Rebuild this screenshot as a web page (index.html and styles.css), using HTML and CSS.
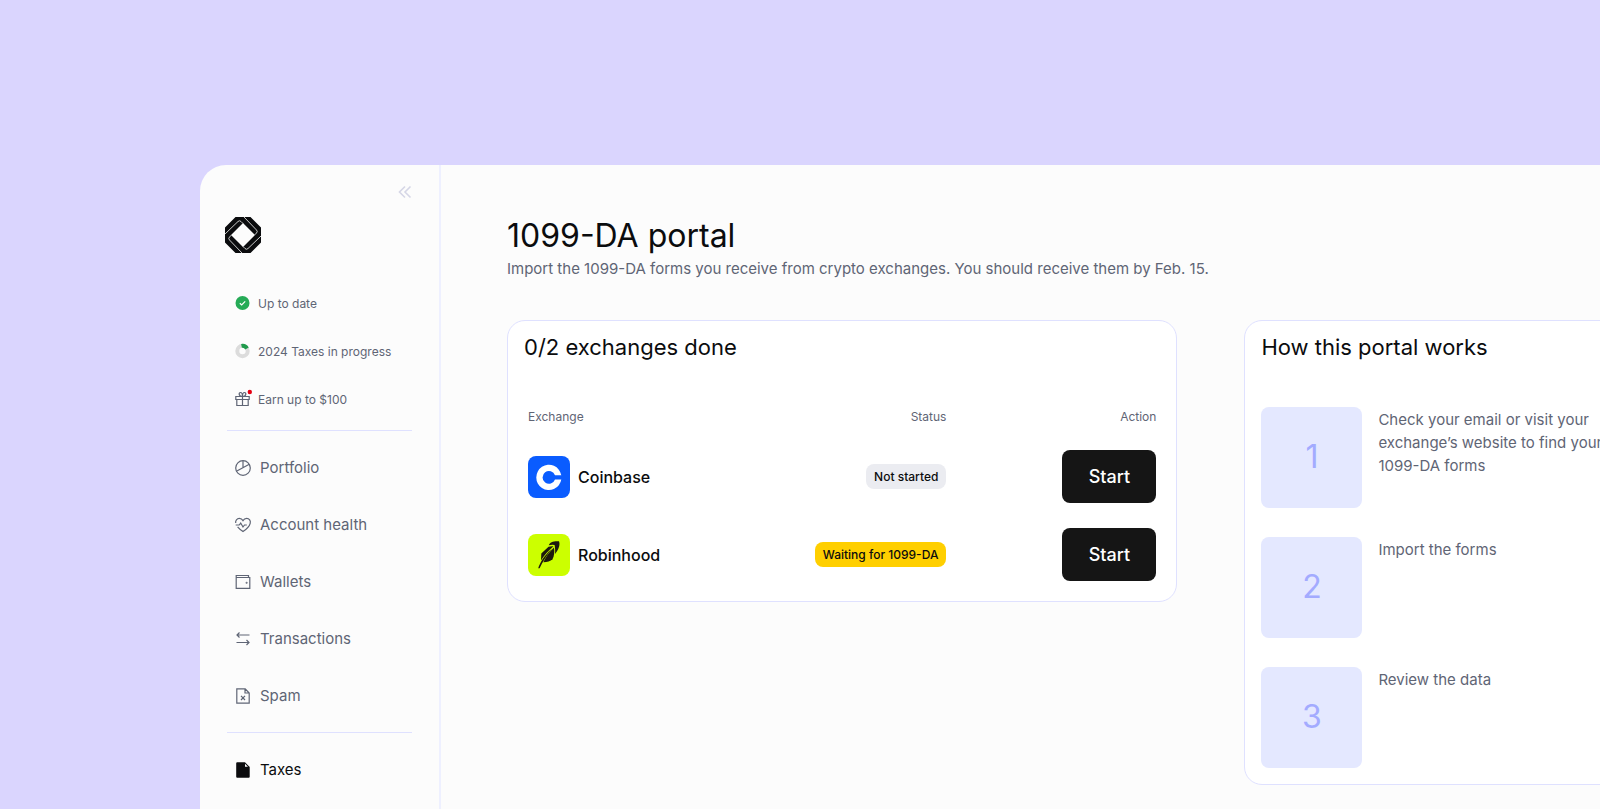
FILE: index.html
```html
<!DOCTYPE html>
<html lang="en">
  <head>
    <meta charset="UTF-8" />
    <meta name="viewport" content="width=device-width, initial-scale=1" />
    <title>1099-DA portal</title>
    <link rel="stylesheet" href="styles.css">
  </head>
  <body>
    <div class="app">
      <aside class="sidebar">
        <button class="collapse" type="button" aria-label="Collapse sidebar">
          <svg width="14" height="14" viewBox="0 0 14 14"><path d="M7 1.500 1.500 7 7 12.500M12.500 1.500 7 7l5.500 5.500"/></svg>
        </button>

        <a class="logo" href="#" aria-label="Home">
          <svg width="36" height="36" viewBox="0 0 36 36">
            <path class="logo-ring" fill-rule="evenodd" d="M10.500 0h15L36 10.500v15L25.500 36h-15L0 25.500v-15zM18 6 6 18 18 30 30 18z"/>
            <g class="logo-seam">
              <path d="M19 0 31.500 13q1.500 1.500 0 3L29.500 18"/>
              <path d="M19 0 31.500 13q1.500 1.500 0 3L29.500 18" transform="rotate(90 18 18)"/>
              <path d="M19 0 31.500 13q1.500 1.500 0 3L29.500 18" transform="rotate(180 18 18)"/>
              <path d="M19 0 31.500 13q1.500 1.500 0 3L29.500 18" transform="rotate(270 18 18)"/>
            </g>
          </svg>
        </a>

        <ul class="quick-list">
          <li>
            <a class="quick-link" href="#">
              <svg width="15" height="16" viewBox="0 0 15 16"><circle cx="7.500" cy="8" r="7" fill="#26ab57" stroke="none"/><path d="M4.800 8.200 6.700 10l3.500-3.700" stroke="#fff"/></svg>
              Up to date
            </a>
          </li>
          <li>
            <a class="quick-link" href="#">
              <svg width="15" height="16" viewBox="0 0 15 16"><circle cx="7.500" cy="8" r="5.200" stroke="#dcdcdc" stroke-width="4"/><path d="M6.500 2.900A5.200 5.200 0 0 1 12 5.400" stroke="#1f9a4b" stroke-width="4"/></svg>
              2024 Taxes in progress
            </a>
          </li>
          <li>
            <a class="quick-link" href="#">
              <svg width="15" height="16" viewBox="0 0 15 16"><path d="M.8 5.500h13.400v3H.8zM1.800 8.500v6h11.400v-6M7.500 5.500v9M7.500 5.500c-4 0-4-4-2-4s2 2.500 2 4c0-1.500 0-4 2-4s2 4-2 4"/><circle cx="14.800" cy="1" r="2.200" fill="#e60012" stroke="none"/></svg>
              Earn up to $100
            </a>
          </li>
        </ul>

        <ul class="nav-list">
          <li>
            <a class="nav-link" href="#">
              <svg width="16" height="16" viewBox="0 0 16 16"><circle cx="8" cy="8" r="7.300"/><path d="M8 .7V8M1.400 11.300 14.300 4.300"/></svg>
              Portfolio
            </a>
          </li>
          <li>
            <a class="nav-link" href="#">
              <svg width="16" height="16" viewBox="0 0 16 16"><path d="M.7 6C.2 3.500 2 1.400 4.300 1.400c1.600 0 2.900.8 3.700 2.200.8-1.400 2.100-2.200 3.700-2.200 2.500 0 4.200 2.300 3.500 4.900C14.400 9.500 11 12.500 8 14.600 6 13.200 4 11.600 2.600 9.900"/><path d="M.7 8h3.500l1.500-2L8 10l1.500-2h2.300"/></svg>
              Account health
            </a>
          </li>
          <li>
            <a class="nav-link" href="#">
              <svg width="16" height="16" viewBox="0 0 16 16"><path d="M13.500 3.500V1.500H1.200v12.800h13.600V3.500H1.200"/><circle cx="11.600" cy="8.800" r=".4"/></svg>
              Wallets
            </a>
          </li>
          <li>
            <a class="nav-link" href="#">
              <svg width="16" height="16" viewBox="0 0 16 16"><path d="M14.500 4H2M4.500 1.500 2 4l2.500 2.500M1.500 11.500H14M11.500 9l2.500 2.500-2.500 2.500"/></svg>
              Transactions
            </a>
          </li>
          <li>
            <a class="nav-link" href="#">
              <svg width="16" height="16" viewBox="0 0 16 16"><path d="M1.800.8h8.400L14.200 5v10.200H1.800zM10 .8V5h4.200M6 7.800l4 4.200M10 7.800 6 12"/></svg>
              Spam
            </a>
          </li>
        </ul>

        <a class="nav-link active" href="#" aria-current="page">
          <svg width="16" height="16" viewBox="0 0 16 16"><path d="M2.200.3H10v4.500h4.700v10a1 1 0 0 1-1 1H2.200a1 1 0 0 1-1-1V1.300a1 1 0 0 1 1-1zM10 .3l4.700 4.700h-1.500L10 1.800z" fill="#0b0c0e" stroke="none"/></svg>
          Taxes
        </a>
      </aside>

      <main class="main">
        <h1>1099-DA portal</h1>
        <p class="lead">Import the 1099-DA forms you receive from crypto exchanges. You should receive them by Feb. 15.</p>

        <div class="cards">
          <section class="card">
            <h2>0/2 exchanges done</h2>
            <table class="exchanges">
              <thead>
                <tr>
                  <th>Exchange</th>
                  <th>Status</th>
                  <th>Action</th>
                </tr>
              </thead>
              <tbody>
                <tr>
                  <td>
                    <div class="exchange">
                      <svg width="42" height="42" viewBox="0 0 42 42"><rect width="42" height="42" rx="8" fill="#0a5cff"/><path d="M33.300 19.300A12.600 12.600 0 1 0 33.300 23.500H27a6.400 6.400 0 1 1 0-4.200z" fill="#fff"/></svg>
                      Coinbase
                    </div>
                  </td>
                  <td><span class="badge">Not started</span></td>
                  <td><button class="start" type="button">Start</button></td>
                </tr>
                <tr>
                  <td>
                    <div class="exchange">
                      <svg width="42" height="42" viewBox="0 0 42 42">
                        <rect width="42" height="42" rx="8" fill="#ccff00"/>
                        <g fill="#1c180d">
                          <path d="M10.200 34.300C12 29 15 23 24 14.500 18.500 21.500 14.500 28 11.600 34.300z"/>
                          <path d="M13 26.500 13.300 19.500 20.500 12.800q2.400-.8 5-.5C20 17 16.500 21 13 26.500z"/>
                          <path d="M15.300 28.300C18 22.500 21 18 26 13.500c.7 4.500.2 8.500-1.500 11.700q-3.200 2.800-9.200 3.100z"/>
                          <path d="M20.800 11.300C22 8.300 25 7 31 7.300c1.200 3.200.2 7.400-3.900 12.600.2-3.200 0-5.900-.5-8.900q-3.100-.5-5.800.3z"/>
                        </g>
                      </svg>
                      Robinhood
                    </div>
                  </td>
                  <td><span class="badge waiting">Waiting for 1099-DA</span></td>
                  <td><button class="start" type="button">Start</button></td>
                </tr>
              </tbody>
            </table>
          </section>

          <section class="card">
            <h2>How this portal works</h2>
            <ol class="steps">
              <li><span class="step-number">1</span><p>Check your email or visit your exchange’s website to find your 1099-DA forms</p></li>
              <li><span class="step-number">2</span><p>Import the forms</p></li>
              <li><span class="step-number">3</span><p>Review the data</p></li>
            </ol>
          </section>
        </div>
      </main>
    </div>
  </body>
</html>
```
FILE: styles.css
```css
:root {
  --ink: #0b0c0e;
  --muted: #5f6575;
  --line: #dfe1ff;
}

* {
  box-sizing: border-box;
}

body {
  margin: 0;
  padding-top: 165px;
  padding-left: 12.5%;
  background: #dad5fe;
  color: var(--ink);
  font-family: Inter, 'Liberation Sans', sans-serif;
  overflow: hidden;
}

h1,
h2,
p,
ul,
ol {
  margin: 0;
  padding: 0;
  font-weight: 400;
}

ul,
ol {
  list-style: none;
}

a {
  color: inherit;
  text-decoration: none;
}

button {
  padding: 0;
  border: 0;
  font-family: inherit;
  cursor: pointer;
}

svg {
  flex: none;
  fill: none;
  stroke: currentColor;
  stroke-width: 1.2;
  overflow: visible;
}

/* The app runs past the right edge of the window */
.app {
  display: flex;
  width: 100vw;
  min-height: calc(100vh - 165px);
  border-top-left-radius: 26px;
  background: #fcfcfc;
}

.sidebar {
  flex: none;
  width: 241px;
  padding: 20px 27px;
  border-right: 2px solid #eef0ff;
}

.collapse {
  display: block;
  height: 14px;
  margin-left: auto;
  background: none;
  color: #d5d6e6;
}

.collapse svg {
  display: block;
  stroke-width: 1.6;
}

.logo {
  display: block;
  width: 36px;
  height: 36px;
  margin: 18px -2px 32px;
}

.logo-ring {
  fill: var(--ink);
  stroke: none;
}

.logo-seam {
  stroke: #c8c8c8;
  stroke-width: 1;
}

.quick-list {
  padding-bottom: 13px;
  border-bottom: 1px solid var(--line);
}

.quick-link {
  display: flex;
  align-items: center;
  gap: 8px;
  height: 36px;
  margin-bottom: 12px;
  padding-left: 8px;
  color: var(--muted);
  font-size: 12px;
}

.quick-list li:last-child .quick-link {
  margin-bottom: 0;
}

.nav-list {
  padding: 8px 0;
  border-bottom: 1px solid var(--line);
  margin-bottom: 8px;
}

.nav-link {
  display: flex;
  align-items: center;
  gap: 9px;
  height: 57px;
  padding-left: 8px;
  color: var(--muted);
  font-size: 15px;
}

.nav-link.active {
  color: var(--ink);
}

.main {
  flex: 1;
  padding: 51px 68px 0 66px;
}

h1 {
  font-size: 32px;
  line-height: 40px;
}

.lead {
  color: var(--muted);
  font-size: 15px;
  line-height: 26px;
}

.cards {
  display: grid;
  grid-template-columns: 11fr 8fr;
  align-items: start;
  gap: 67px;
  margin-top: 38px;
}

.card {
  padding: 10px 16px 16px;
  border: 1px solid var(--line);
  border-radius: 18px;
  background: #fff;
}

h2 {
  font-size: 22px;
  line-height: 32px;
}

.exchanges {
  width: 100%;
  padding: 0 4px 4px;
  margin-top: 40px;
  border-spacing: 0;
}

.exchanges th {
  padding: 0 0 19px;
  color: var(--muted);
  font-size: 12px;
  font-weight: 400;
  line-height: 28px;
  text-align: right;
}

.exchanges td {
  padding: 0 0 25px;
  text-align: right;
}

.exchanges tr:last-child td {
  padding-bottom: 0;
}

.exchanges th:first-child {
  text-align: left;
}

.exchanges th:last-child {
  width: 210px;
}

.exchange {
  display: flex;
  align-items: center;
  gap: 8px;
  font-size: 16px;
  font-weight: 500;
}

.exchange svg {
  stroke: none;
}

.badge {
  display: inline-block;
  padding: 0 8px;
  border-radius: 8px;
  background: #ebecf1;
  font-size: 12px;
  font-weight: 500;
  line-height: 25px;
}

.badge.waiting {
  background: #ffcf00;
}

.start {
  display: block;
  width: 94px;
  height: 53px;
  margin-left: auto;
  border-radius: 8px;
  background: #151515;
  color: #fff;
  font-size: 18px;
  font-weight: 500;
}

.steps {
  display: grid;
  gap: 29px;
  margin-top: 44px;
}

.steps li {
  display: flex;
  gap: 16px;
}

.step-number {
  display: flex;
  flex: none;
  align-items: center;
  justify-content: center;
  width: 101px;
  height: 101px;
  padding-bottom: 2px;
  border-radius: 8px;
  background: #e4e8ff;
  color: #a3abff;
  font-size: 32px;
}

.steps p {
  max-width: 240px;
  padding-top: 1px;
  color: var(--muted);
  font-size: 15px;
  line-height: 23px;
}
```
